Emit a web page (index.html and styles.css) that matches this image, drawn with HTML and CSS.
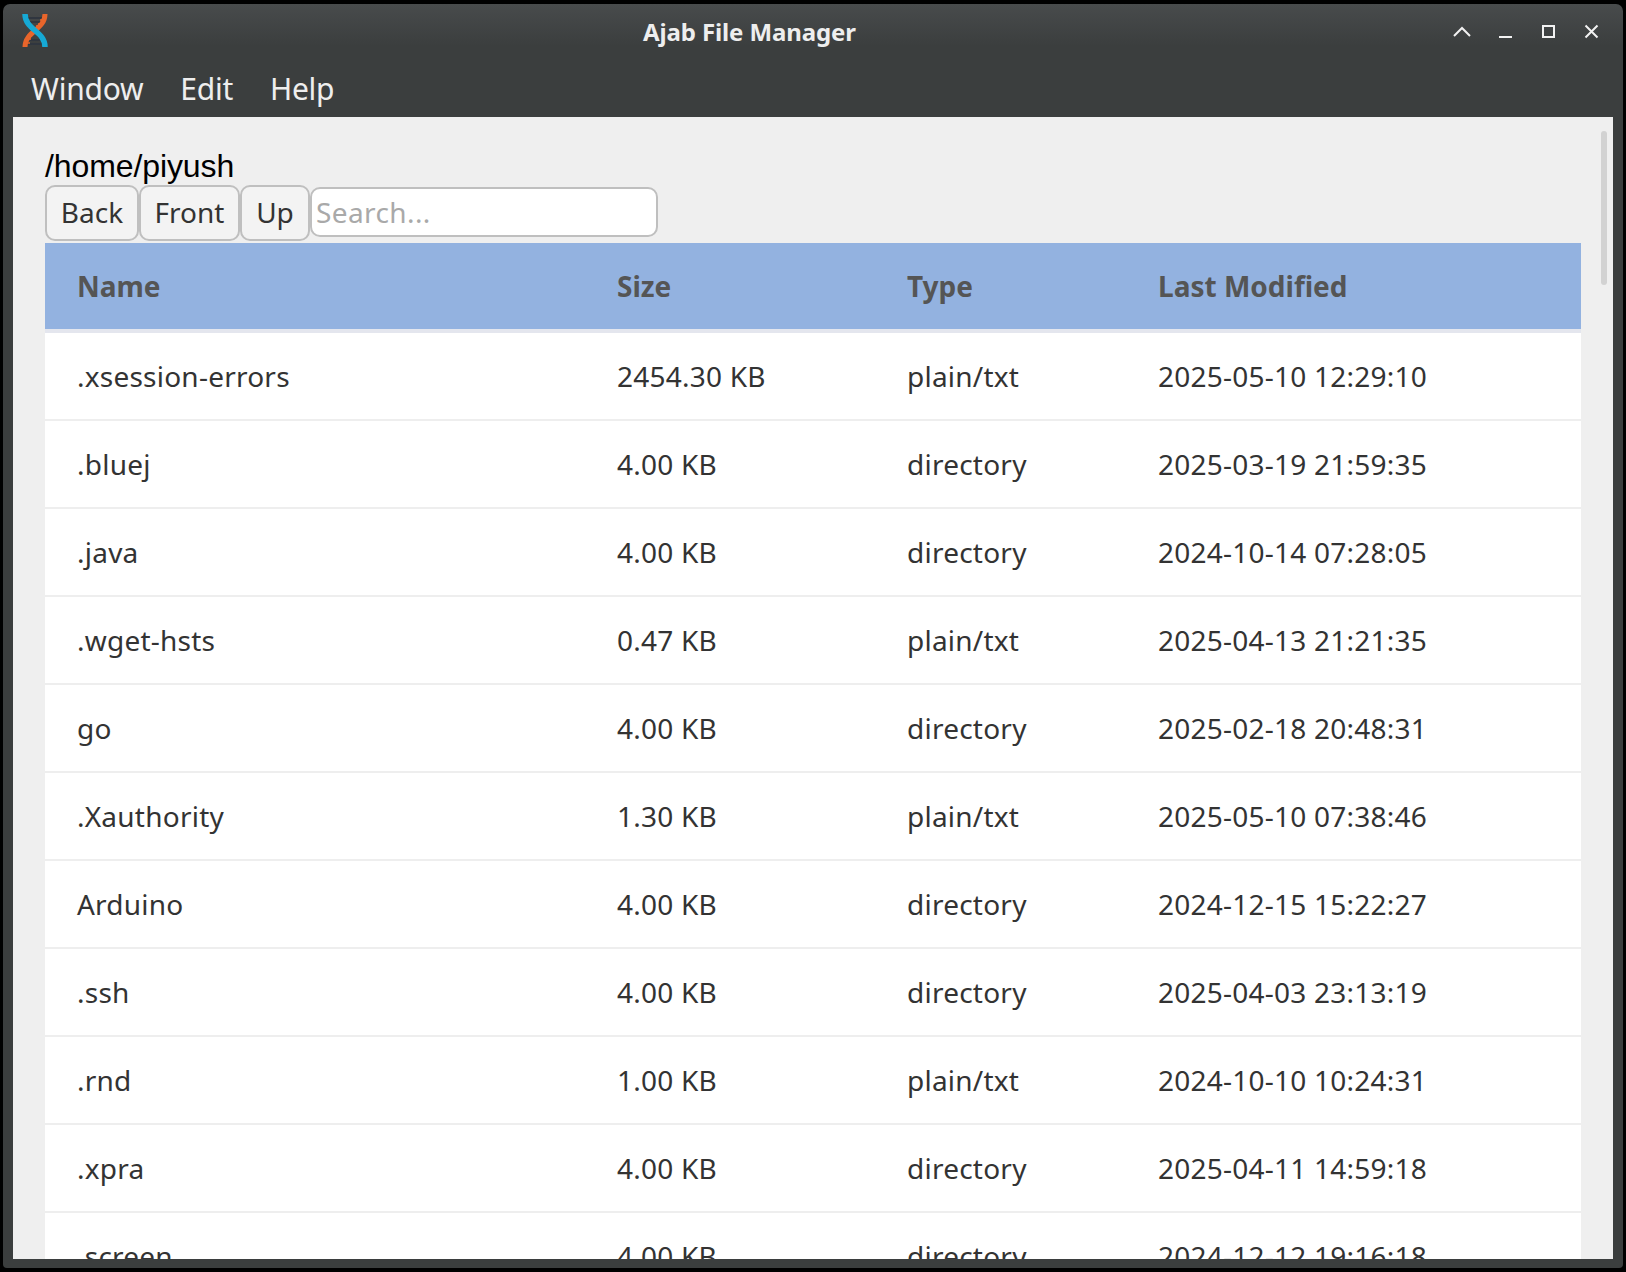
FILE: index.html
```html
<!DOCTYPE html>
<html lang="en">
<head>
<meta charset="utf-8">
<title>Ajab File Manager</title>
<link rel="stylesheet" href="styles.css">
</head>
<body>
<div class="window">
  <header class="titlebar">
    <svg class="logo" width="28" height="36" viewBox="0 0 28 36">
      <path d="M7 5H22M9 9H21M7 27H21M6 31H21" stroke="#30363f" stroke-width="2"/>
      <path d="M24 1C24 17 4 18 4 34" fill="none" stroke="#e8652b" stroke-width="5"/>
      <path d="M19 7H23M17 11H21M15 13H18M7 23H11M7 26H10M6 30H9" stroke="#e8652b" stroke-width="1.5"/>
      <path d="M4 1C4 17 24 18 24 34" fill="none" stroke="#16a9d5" stroke-width="5.5"/>
    </svg>
    <h1 class="title">Ajab File Manager</h1>
    <div class="controls">
      <svg width="20" height="20" viewBox="0 0 20 20"><path d="M2 14L10 6L18 14"/></svg>
      <svg width="20" height="20" viewBox="0 0 20 20"><path d="M4 15H17"/></svg>
      <svg width="20" height="20" viewBox="0 0 20 20"><path d="M5 4H16V15H5Z"/></svg>
      <svg width="20" height="20" viewBox="0 0 20 20"><path d="M4.5 3.5L16.5 15.5M16.5 3.5L4.5 15.5"/></svg>
    </div>
  </header>
  <nav class="menubar"><span>Window</span><span>Edit</span><span>Help</span></nav>
  <main class="content">
    <div class="path">/home/piyush</div>
    <div class="toolbar">
      <button class="btn back">Back</button><button class="btn front">Front</button><button class="btn up">Up</button><input class="search" type="text" placeholder="Search...">
    </div>
    <table class="files">
      <colgroup><col class="c-name"><col class="c-size"><col class="c-type"><col class="c-date"></colgroup>
      <thead><tr><th>Name</th><th>Size</th><th>Type</th><th>Last Modified</th></tr></thead>
      <tbody>
        <tr><td>.xsession-errors</td><td>2454.30 KB</td><td>plain/txt</td><td>2025-05-10 12:29:10</td></tr>
        <tr><td>.bluej</td><td>4.00 KB</td><td>directory</td><td>2025-03-19 21:59:35</td></tr>
        <tr><td>.java</td><td>4.00 KB</td><td>directory</td><td>2024-10-14 07:28:05</td></tr>
        <tr><td>.wget-hsts</td><td>0.47 KB</td><td>plain/txt</td><td>2025-04-13 21:21:35</td></tr>
        <tr><td>go</td><td>4.00 KB</td><td>directory</td><td>2025-02-18 20:48:31</td></tr>
        <tr><td>.Xauthority</td><td>1.30 KB</td><td>plain/txt</td><td>2025-05-10 07:38:46</td></tr>
        <tr><td>Arduino</td><td>4.00 KB</td><td>directory</td><td>2024-12-15 15:22:27</td></tr>
        <tr><td>.ssh</td><td>4.00 KB</td><td>directory</td><td>2025-04-03 23:13:19</td></tr>
        <tr><td>.rnd</td><td>1.00 KB</td><td>plain/txt</td><td>2024-10-10 10:24:31</td></tr>
        <tr><td>.xpra</td><td>4.00 KB</td><td>directory</td><td>2025-04-11 14:59:18</td></tr>
        <tr><td>.screen</td><td>4.00 KB</td><td>directory</td><td>2024-12-12 19:16:18</td></tr>
      </tbody>
    </table>
    <div class="scroll-thumb"></div>
  </main>
</div>
</body>
</html>
```
FILE: styles.css
```css
* { box-sizing: border-box; }
html, body { height: 100%; }
body {
  margin: 0;
  padding: 4px 3px;
  background: #000;
  overflow: hidden;
  font-family: "Noto Sans", sans-serif;
}
.window {
  height: 1264px;
  display: flex;
  flex-direction: column;
  padding: 0 10px 9px;
  border-radius: 7px 7px 4px 4px;
  background: linear-gradient(#484b4c 0, #3b3e3e 42px);
  overflow: hidden;
}
.titlebar {
  height: 56px;
  display: flex;
  align-items: center;
  padding: 0 12px 0 8px;
}
.logo { flex: none; margin-top: -3px; }
.title {
  flex: 1;
  margin: 0 0 0 594px;
  color: #eee;
  font-size: 24px;
  font-weight: 700;
  line-height: 32px;
  letter-spacing: -0.12px;
}
.controls { display: flex; gap: 23px; margin-top: -1px; }
.controls svg { fill: none; stroke: #f2f2f2; stroke-width: 2; }
.menubar {
  height: 57px;
  display: flex;
  gap: 37px;
  padding-left: 18px;
  color: #eee;
  font-size: 30px;
  line-height: 58px;
  letter-spacing: -0.25px;
}
.content {
  position: relative;
  flex: 1;
  min-height: 0;
  padding: 32px;
  background: #efefef;
  overflow: hidden;
}
.path {
  height: 36px;
  color: #000;
  font: 32px/34px "Liberation Sans", sans-serif;
  letter-spacing: -0.1px;
}
.toolbar {
  height: 58px;
  display: flex;
  align-items: flex-start;
}
.btn, .search {
  border: 2px solid #bfbfbf;
  border-radius: 10px;
  font: 28px/38px "Noto Sans", sans-serif;
}
.btn {
  height: 56px;
  padding: 0 0 2px;
  background: #f3f3f3;
  color: #333;
}
.back { width: 94px; }
.front { width: 101px; }
.up { width: 70px; }
.search {
  width: 348px;
  height: 50px;
  margin-top: 2px;
  padding: 0 4px;
  background: #fff;
  letter-spacing: 0.4px;
}
.search::placeholder { color: #a9a9a9; opacity: 1; }
.files {
  width: 1536px;
  table-layout: fixed;
  border-collapse: separate;
  border-spacing: 0;
  background: #fff;
}
.c-name { width: 540px; }
.c-size { width: 290px; }
.c-type { width: 251px; }
th, td {
  height: 88px;
  padding: 0 32px;
  border-bottom: 2px solid #eee;
  color: #333;
  font-size: 28px;
  line-height: 38px;
  letter-spacing: 0.23px;
  text-align: left;
  white-space: nowrap;
}
th {
  height: 90px;
  border-bottom: 4px solid #e4e6ee;
  background: #93b2e0;
  background-clip: padding-box;
  color: #555;
  letter-spacing: 0;
}
.scroll-thumb {
  position: absolute;
  top: 14px;
  right: 6px;
  width: 6px;
  height: 154px;
  border-radius: 3px;
  background: #d2d2d2;
}
```
